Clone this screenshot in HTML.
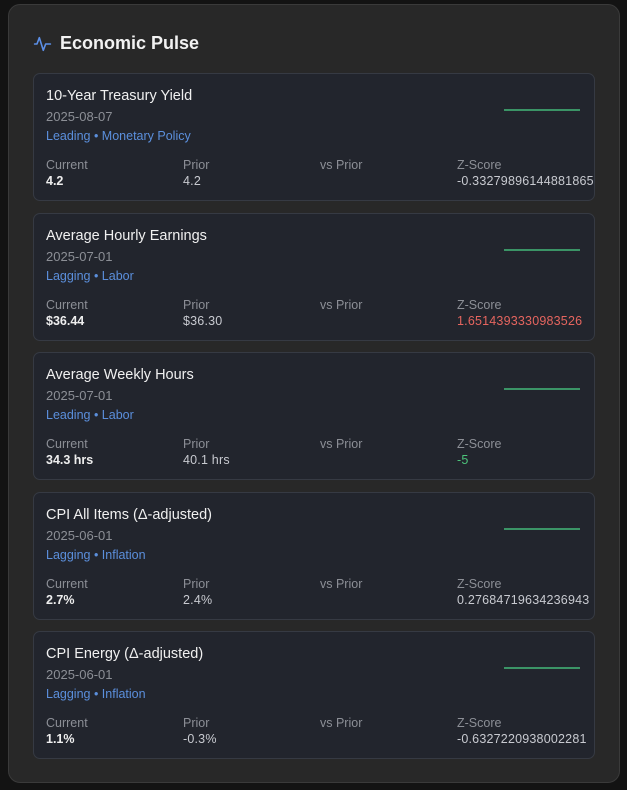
<!DOCTYPE html>
<html><head><style>
*{box-sizing:border-box;margin:0;padding:0}
body{width:627px;height:790px;background:#131313;font-family:"Liberation Sans",sans-serif;overflow:hidden;position:relative}
.panel{position:absolute;left:8px;top:4px;width:612px;height:779px;background:#282828;border:1px solid #3a3a3a;border-radius:12px}
.h{position:absolute;left:24px;top:28px;display:flex;align-items:center;color:#f2f2f2;font-size:18px;font-weight:bold}
.h svg{margin-right:8px}
.card{position:absolute;left:24px;width:562px;height:128px;background:#22252d;border:1px solid #363a43;border-radius:7px}
.t{position:absolute;left:12px;top:14px;color:#f0f0f0;font-size:14.5px}
.d{position:absolute;left:12px;top:35px;color:#8c8f96;font-size:13px}
.g{position:absolute;left:12px;top:55px;color:#5b8fdc;font-size:12.5px}
.sp{position:absolute;left:470px;top:35px;width:76px;height:2px;background:#3b9466}
.c{position:absolute;top:83px;font-size:12.5px;color:#8c8f96;line-height:16px}
.c b{display:block;color:#eee;font-weight:bold}
.c span{display:block;color:#c8cad0;letter-spacing:0.2px}
</style></head><body>
<div class="panel">
<div class="h"><svg width="19" height="20" viewBox="0 0 24 24" fill="none" stroke="#5b8fe8" stroke-width="2" stroke-linecap="round" stroke-linejoin="round"><path d="M2 12h3l3-8 5 16 3-8h6"/></svg>Economic Pulse</div>

<div class="card" style="top:68px"><div class="t">10-Year Treasury Yield</div><div class="d">2025-08-07</div><div class="g">Leading • Monetary Policy</div><div class="sp"></div>
<div class="c" style="left:12px">Current<b>4.2</b></div><div class="c" style="left:149px">Prior<span>4.2</span></div><div class="c" style="left:286px">vs Prior</div><div class="c" style="left:423px">Z-Score<span>-0.33279896144881865</span></div></div>

<div class="card" style="top:208px"><div class="t">Average Hourly Earnings</div><div class="d">2025-07-01</div><div class="g">Lagging • Labor</div><div class="sp"></div>
<div class="c" style="left:12px">Current<b>$36.44</b></div><div class="c" style="left:149px">Prior<span>$36.30</span></div><div class="c" style="left:286px">vs Prior</div><div class="c" style="left:423px">Z-Score<span style="color:#e5655f">1.6514393330983526</span></div></div>

<div class="card" style="top:347px"><div class="t">Average Weekly Hours</div><div class="d">2025-07-01</div><div class="g">Leading • Labor</div><div class="sp"></div>
<div class="c" style="left:12px">Current<b>34.3 hrs</b></div><div class="c" style="left:149px">Prior<span>40.1 hrs</span></div><div class="c" style="left:286px">vs Prior</div><div class="c" style="left:423px">Z-Score<span style="color:#4cc37a">-5</span></div></div>

<div class="card" style="top:487px"><div class="t">CPI All Items (Δ-adjusted)</div><div class="d">2025-06-01</div><div class="g">Lagging • Inflation</div><div class="sp"></div>
<div class="c" style="left:12px">Current<b>2.7%</b></div><div class="c" style="left:149px">Prior<span>2.4%</span></div><div class="c" style="left:286px">vs Prior</div><div class="c" style="left:423px">Z-Score<span>0.27684719634236943</span></div></div>

<div class="card" style="top:626px"><div class="t">CPI Energy (Δ-adjusted)</div><div class="d">2025-06-01</div><div class="g">Lagging • Inflation</div><div class="sp"></div>
<div class="c" style="left:12px">Current<b>1.1%</b></div><div class="c" style="left:149px">Prior<span>-0.3%</span></div><div class="c" style="left:286px">vs Prior</div><div class="c" style="left:423px">Z-Score<span>-0.6327220938002281</span></div></div>
</div>
</body></html>
